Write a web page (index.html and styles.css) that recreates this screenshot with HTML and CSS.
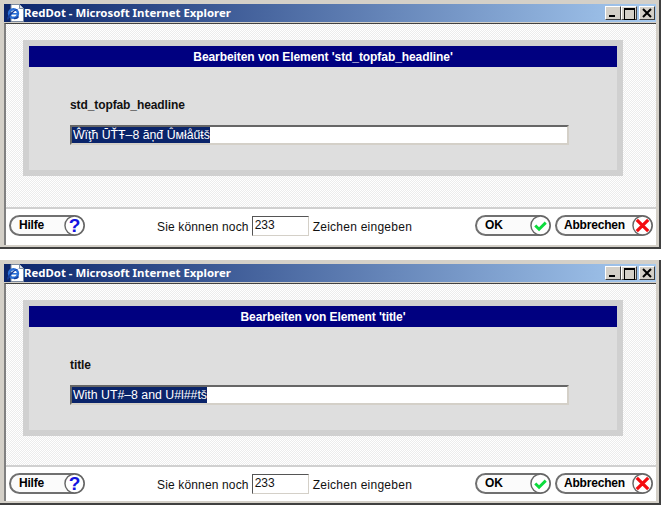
FILE: index.html
```html
<!DOCTYPE html>
<html lang="de">
<head>
<meta charset="utf-8">
<title>RedDot</title>
<link rel="stylesheet" href="styles.css">
</head>
<body>
<svg class="defs" width="0" height="0" aria-hidden="true">
  <symbol id="ie" viewBox="0 0 18 18">
    <path d="M5 .5h8.500l4 4v13H5z" fill="#fff" stroke="#7a8aa0"/>
    <path d="M13.500.5v4h4" fill="#dfe6ef" stroke="#7a8aa0"/>
    <ellipse cx="7.500" cy="9.500" rx="4.500" ry="4.300" fill="none" stroke="#2a6fd6" stroke-width="2.400"/>
    <path d="M3.500 9.800h8" stroke="#2a6fd6" stroke-width="1.600"/>
    <path d="M1 15.500C1 11 8 5 13.500 4.500 9 6 4 11 2.500 15.500z" fill="#123c9c"/>
    <path d="M8 14.500c2 .3 3.500-.5 4.500-2" fill="none" stroke="#123c9c" stroke-width="1.500"/>
  </symbol>
  <symbol id="ok" viewBox="0 0 22 22">
    <circle cx="11" cy="11" r="10" fill="#fff" stroke="#666" stroke-width="1.500"/>
    <path d="M5.500 11l4 4 7-7" fill="none" stroke="#0bdc3c" stroke-width="3"/>
  </symbol>
  <symbol id="cancel" viewBox="0 0 22 22">
    <circle cx="11" cy="11" r="10" fill="#fff" stroke="#666" stroke-width="1.500"/>
    <path d="M5 5l12 12M17 5L5 17" fill="none" stroke="#f40c10" stroke-width="3.400"/>
  </symbol>
  <symbol id="cross" viewBox="0 0 14 12">
    <path d="M3 2l8 8M11 2l-8 8" fill="none" stroke="#000" stroke-width="2"/>
  </symbol>
</svg>

<section class="window">
  <header class="titlebar">
    <svg class="appicon"><use href="#ie"/></svg>
    <span class="titletext">RedDot - Microsoft Internet Explorer</span>
    <div class="winbtns">
      <span class="winbtn min"></span>
      <span class="winbtn max"></span>
      <span class="winbtn close"><svg class="crossicon"><use href="#cross"/></svg></span>
    </div>
  </header>
  <div class="client">
    <main class="hatch hatch-tall">
      <div class="panel">
        <h1 class="panelhead">Bearbeiten von Element 'std_topfab_headline'</h1>
        <div class="fieldlabel">std_topfab_headline</div>
        <div class="textbox"><span class="selected">Ŵïţħ ŪŤŦ–8 ăņđ Ûмłåűŧš</span></div>
      </div>
    </main>
    <footer class="footer">
      <a class="pill pill-help"><span class="pilltext">Hilfe</span><svg class="pillicon" viewBox="0 0 22 22"><circle cx="11" cy="11" r="10" fill="#fff" stroke="#666" stroke-width="1.500"/><text x="11" y="18" text-anchor="middle" class="qmark">?</text></svg></a>
      <div class="counter">
        <span>Sie können noch</span>
        <span class="countbox">233</span>
        <span class="after">Zeichen eingeben</span>
      </div>
      <div class="actions">
        <a class="pill pill-ok"><span class="pilltext">OK</span><svg class="pillicon"><use href="#ok"/></svg></a>
        <a class="pill pill-cancel"><span class="pilltext">Abbrechen</span><svg class="pillicon"><use href="#cancel"/></svg></a>
      </div>
    </footer>
  </div>
</section>

<section class="window second">
  <header class="titlebar">
    <svg class="appicon"><use href="#ie"/></svg>
    <span class="titletext">RedDot - Microsoft Internet Explorer</span>
    <div class="winbtns">
      <span class="winbtn min"></span>
      <span class="winbtn max"></span>
      <span class="winbtn close"><svg class="crossicon"><use href="#cross"/></svg></span>
    </div>
  </header>
  <div class="client">
    <main class="hatch">
      <div class="panel">
        <h1 class="panelhead">Bearbeiten von Element 'title'</h1>
        <div class="fieldlabel">title</div>
        <div class="textbox"><span class="selected">With UT#–8 and U#l##tš</span></div>
      </div>
    </main>
    <footer class="footer">
      <a class="pill pill-help"><span class="pilltext">Hilfe</span><svg class="pillicon" viewBox="0 0 22 22"><circle cx="11" cy="11" r="10" fill="#fff" stroke="#666" stroke-width="1.500"/><text x="11" y="18" text-anchor="middle" class="qmark">?</text></svg></a>
      <div class="counter">
        <span>Sie können noch</span>
        <span class="countbox">233</span>
        <span class="after">Zeichen eingeben</span>
      </div>
      <div class="actions">
        <a class="pill pill-ok"><span class="pilltext">OK</span><svg class="pillicon"><use href="#ok"/></svg></a>
        <a class="pill pill-cancel"><span class="pilltext">Abbrechen</span><svg class="pillicon"><use href="#cancel"/></svg></a>
      </div>
    </footer>
  </div>
</section>
</body>
</html>
```
FILE: styles.css
```css
* { box-sizing: border-box; }
html, body { margin: 0; padding: 0; background: #fff; }
body { width: 663px; height: 506px; overflow: hidden; font-family: "Liberation Sans", Arial, sans-serif; }
.defs { position: absolute; }
.qmark { font: bold 20px "Liberation Sans", Arial, sans-serif; fill: #1414e0; }

.window {
  width: 661px;
  height: 249px;
  background: #d4d0c8;
  padding: 4px 3px 2px 4px;
  border-bottom: 2px solid #404040;
  border-right: 2px solid #404040;
  display: flex;
  flex-direction: column;
}
.second { height: 245px; margin-top: 11px; }

.titlebar {
  height: 18px;
  flex: none;
  display: flex;
  align-items: center;
  background: linear-gradient(90deg, #0a246a, #a6caf0);
  color: #fff;
  padding-left: 2px;
}
.appicon { width: 18px; height: 18px; flex: none; }
.titletext { font: bold 11.4px/18px "Noto Sans", Verdana, sans-serif; white-space: nowrap; }
.winbtns { margin-left: auto; display: flex; padding-right: 1px; }
.winbtn {
  width: 16px;
  height: 14px;
  background: #d4d0c8;
  border: 1px solid;
  border-color: #fff #404040 #404040 #fff;
  position: relative;
}
.winbtn.close { margin-left: 2px; }
.crossicon { position: absolute; left: 0; top: 0; width: 14px; height: 12px; }
.winbtn.min::after { content: ""; position: absolute; left: 3px; bottom: 2px; width: 6px; height: 2px; background: #000; }
.winbtn.max::after { content: ""; position: absolute; left: 2px; top: 1px; width: 9px; height: 9px; border: 1px solid #000; border-top-width: 2px; }

.client {
  flex: 1;
  margin-top: 1px;
  display: flex;
  flex-direction: column;
  background: #fff;
  border-top: 1px solid #404040;
  border-left: 2px solid #808080;
  min-height: 0;
}
.hatch {
  flex: none;
  height: 183px;
  padding: 16px 32px 0 17px;
  background-color: #fff;
  background-image: conic-gradient(#ececec 25%, #fff 0 50%, #ececec 0 75%, #fff 0);
  background-size: 2px 2px;
  border-bottom: 2px solid #d0d0d0;
}
.hatch-tall { height: 185px; }

.panel {
  width: 600px;
  height: 136px;
  background: #dedede;
  border: 6px solid #d0d0d0;
}
.panelhead {
  margin: 0;
  height: 21px;
  background: #000080;
  color: #fff;
  font: bold 12px/22px "Liberation Sans", Arial, sans-serif;
  letter-spacing: -.07px;
  text-align: center;
}
.fieldlabel {
  margin: 31px 0 0 41px;
  font: bold 12px/14px "Liberation Sans", Arial, sans-serif;
  letter-spacing: -.1px;
  color: #111;
}
.textbox {
  margin: 13px 0 0 41px;
  width: 499px;
  height: 20px;
  background: #fff;
  border: 2px solid;
  border-color: #666 #d4d0c8 #d4d0c8 #666;
  font: 12.3px/16px "Liberation Sans", Arial, sans-serif;
  white-space: nowrap;
}
.selected { background: #0a246a; color: #fff; display: inline-block; height: 16px; padding: 0 0 0 1px; vertical-align: top; }

.footer {
  flex: 1;
  display: flex;
  align-items: flex-start;
  padding: 6px 3px 0 3px;
  background: #fff;
  position: relative;
}
.pill {
  display: flex;
  align-items: center;
  justify-content: space-between;
  height: 21px;
  background: #fbfbfb;
  border: 2px solid #707070;
  border-radius: 11px;
  color: #000;
  padding-left: 8px;
}
.pilltext { font: bold 12px/17px "Liberation Sans", Arial, sans-serif; letter-spacing: -.2px; }
.pillicon { width: 21px; height: 21px; flex: none; margin-right: -2px; }
.pill-help { width: 76px; }
.pill-ok { width: 76px; }
.pill-cancel { width: 98px; padding-left: 7px; }
.actions { margin-left: auto; display: flex; gap: 4px; }

.counter {
  position: absolute;
  left: 151px;
  top: 7px;
  display: flex;
  align-items: center;
  font: 12px/22px "Liberation Sans", Arial, sans-serif;
  color: #111;
  letter-spacing: .15px;
}
.countbox {
  width: 57px;
  height: 20px;
  border: 1px solid;
  border-color: #555 #d4d0c8 #d4d0c8 #555;
  padding-left: 2px;
  line-height: 17px;
  letter-spacing: 0;
  background: #fff;
  margin-left: 3px;
  margin-top: -2px;
}
.after { margin-left: 4px; letter-spacing: .25px; }
```
